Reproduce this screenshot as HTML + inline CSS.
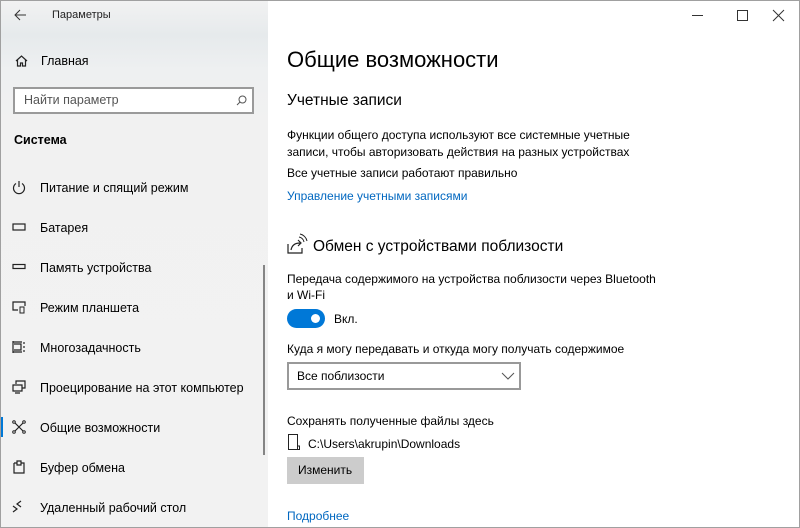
<!DOCTYPE html>
<html><head><meta charset="utf-8"><style>
*{margin:0;padding:0;box-sizing:border-box}
html,body{width:800px;height:528px;overflow:hidden}
body{font-family:"Liberation Sans","Noto Sans CJK SC",sans-serif;color:#000;background:#fff;position:relative}
.side{position:absolute;left:0;top:0;width:268px;height:528px;background:linear-gradient(180deg,#f2f2f2 0,#e6eaec 35px,#eef0f1 70px,#f1f1f1 120px,#f2f2f2 100%)}
.a{position:absolute;white-space:nowrap}
.si{position:absolute;left:12px;font-size:12.5px;white-space:nowrap}
.si svg{position:absolute;left:0;top:-1px}
.si span{position:absolute;left:28px;top:0;white-space:nowrap}
.main{font-size:12px}
.link{color:#0067c0}
svg{overflow:visible}
</style></head><body>
<div class="side">
<svg class="a" style="left:14px;top:9px" width="12" height="12"><path d="M12 6H1M6 1L1 6l5 5" fill="none" stroke="#333" stroke-width="1"/></svg>
<div class="a" style="left:52px;top:9px;font-size:11px;color:#222">Параметры</div>
<svg class="a" style="left:15px;top:55px" width="13" height="12"><path d="M1 6L6.5 1 12 6M2.5 5v6h3V8h2v3h3V5" fill="none" stroke="#222" stroke-width="1.2"/></svg>
<div class="a" style="left:41px;top:54px;font-size:12.5px">Главная</div>
<div class="a" style="left:13px;top:87px;width:241px;height:27px;border:2px solid #9a9a9a;background:#fff"></div>
<div class="a" style="left:24px;top:93px;font-size:12.5px;color:#555">Найти параметр</div>
<svg class="a" style="left:236px;top:95px" width="11" height="11"><circle cx="6.5" cy="4.5" r="3.5" fill="none" stroke="#555"/><path d="M4 7L1 10" stroke="#555"/></svg>
<div class="a" style="left:14px;top:133px;font-size:12.5px;font-weight:bold">Система</div>
<div class="si" style="top:181px"><svg width="14" height="14"><path d="M4 3.5A5.5 5.5 0 1 0 10 3.5M7 1v6" fill="none" stroke="#222" stroke-width="1.2"/></svg><span>Питание и спящий режим</span></div>
<div class="si" style="top:221px"><svg width="14" height="14"><rect x="1" y="4" width="12" height="6" fill="none" stroke="#222" stroke-width="1.2"/></svg><span>Батарея</span></div>
<div class="si" style="top:261px"><svg width="14" height="14"><rect x="1" y="4.5" width="12" height="4" fill="none" stroke="#222" stroke-width="1.2"/></svg><span>Память устройства</span></div>
<div class="si" style="top:301px"><svg width="14" height="14"><path d="M6 10H1V2h12v4" fill="none" stroke="#222" stroke-width="1.2"/><path d="M8 7h4v6H8z" fill="none" stroke="#222"/></svg><span>Режим планшета</span></div>
<div class="si" style="top:341px"><svg width="14" height="14"><path d="M1 1v12M1 2h9M1 12h9M2 4h7v6H2M12 2v2M12 6v2M12 10v2" fill="none" stroke="#222" stroke-width="1.2"/></svg><span>Многозадачность</span></div>
<div class="si" style="top:381px"><svg width="14" height="14"><path d="M4 4V1h9v7h-3M1 5h9v6H1zM3 13h5" fill="none" stroke="#222" stroke-width="1.2"/></svg><span>Проецирование на этот компьютер</span></div>
<div class="a" style="left:0;top:417px;width:3px;height:20px;background:#0078d7"></div>
<div class="si" style="top:421px"><svg width="14" height="14"><path d="M3 3l8 8M11 3l-8 8" stroke="#222" stroke-width="1.2"/><circle cx="2" cy="2" r="1.3" fill="none" stroke="#222"/><circle cx="12" cy="2" r="1.3" fill="none" stroke="#222"/><circle cx="2" cy="12" r="1.3" fill="none" stroke="#222"/><circle cx="12" cy="12" r="1.3" fill="none" stroke="#222"/></svg><span>Общие возможности</span></div>
<div class="si" style="top:461px"><svg width="14" height="14"><path d="M2 3h3M9 3h3v10H2V3M5 1h4v4H5z" fill="none" stroke="#222" stroke-width="1.2"/></svg><span>Буфер обмена</span></div>
<div class="si" style="top:501px"><svg width="14" height="14"><path d="M1 6l4 3-4 3M9 1l-4 3 4 3" fill="none" stroke="#222" stroke-width="1.2"/></svg><span>Удаленный рабочий стол</span></div>
<div class="a" style="left:263px;top:265px;width:2px;height:190px;background:#858585"></div>
</div>
<div class="a" style="left:0;top:0;width:800px;height:528px;border:1px solid #a0a0a0;pointer-events:none"></div>
<svg class="a" style="left:692px;top:10px" width="100" height="12"><path d="M0 5.5h11" stroke="#333"/><rect x="45.5" y="0.5" width="10" height="10" fill="none" stroke="#333"/><path d="M81 0l11 11M92 0L81 11" stroke="#333"/></svg>
<div class="main">
<div class="a" style="left:287px;top:47px;font-size:22px">Общие возможности</div>
<div class="a" style="left:287px;top:92px;font-size:15.5px">Учетные записи</div>
<div class="a" style="left:287px;top:128px">Функции общего доступа используют все системные учетные</div>
<div class="a" style="left:287px;top:145px">записи, чтобы авторизовать действия на разных устройствах</div>
<div class="a" style="left:287px;top:166px">Все учетные записи работают правильно</div>
<div class="a link" style="left:287px;top:189px">Управление учетными записями</div>
<svg class="a" style="left:287px;top:236px" width="20" height="18"><path d="M1 8v9h14v-5M4 14c1-5 4-7 9-7M11 4l3 3-3 3" fill="none" stroke="#222" stroke-width="1.2"/><path d="M12 1a6 6 0 0 1 5 5M13 -2a9 9 0 0 1 7 7" fill="none" stroke="#222"/></svg>
<div class="a" style="left:313px;top:238px;font-size:15.5px">Обмен с устройствами поблизости</div>
<div class="a" style="left:287px;top:272px">Передача содержимого на устройства поблизости через Bluetooth</div>
<div class="a" style="left:287px;top:288px">и Wi-Fi</div>
<div class="a" style="left:287px;top:309px;width:38px;height:19px;border-radius:10px;background:#0078d7"></div>
<div class="a" style="left:311px;top:314px;width:9px;height:9px;border-radius:50%;background:#fff"></div>
<div class="a" style="left:334px;top:312px">Вкл.</div>
<div class="a" style="left:287px;top:342px">Куда я могу передавать и откуда могу получать содержимое</div>
<div class="a" style="left:287px;top:362px;width:234px;height:28px;border:2px solid #999"></div>
<div class="a" style="left:297px;top:369px">Все поблизости</div>
<svg class="a" style="left:502px;top:373px" width="12" height="6"><path d="M0 0l6 6 6-6" fill="none" stroke="#555"/></svg>
<div class="a" style="left:287px;top:414px">Сохранять полученные файлы здесь</div>
<svg class="a" style="left:288px;top:434px" width="12" height="16"><path d="M.5 .5h9v15H.5zM9.5 12h2v3.5h-2" fill="none" stroke="#222"/></svg>
<div class="a" style="left:308px;top:437px">C:\Users\akrupin\Downloads</div>
<div class="a" style="left:287px;top:457px;width:77px;height:27px;background:#ccc"></div>
<div class="a" style="left:298px;top:463px">Изменить</div>
<div class="a link" style="left:287px;top:509px">Подробнее</div>
</div>
</body></html>
